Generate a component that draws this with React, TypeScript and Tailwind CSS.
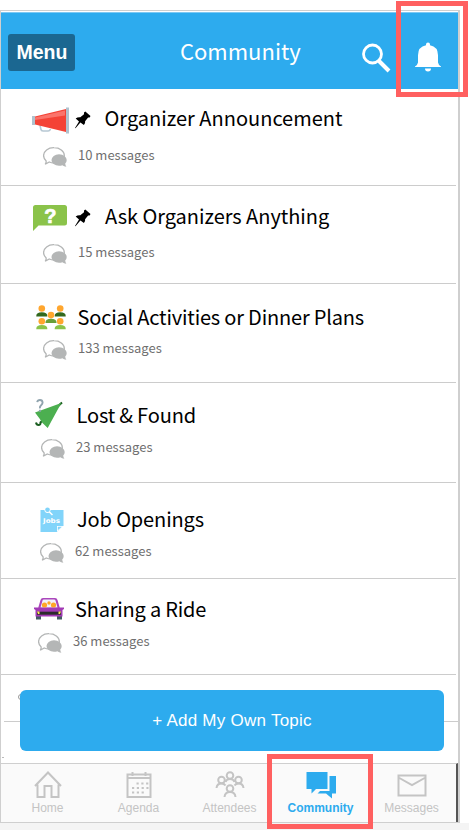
import type { ReactNode } from "react"

import clsx from "clsx"

function Megaphone() {
  return (
    <svg className="size-full" viewBox="0 0 37 27" fill="none">
      <path d="M8 18l.8 4q.4 2 2.200 2h5q2 0 2.300-2" stroke="#b7c8d3" strokeWidth="1.600" />
      <path d="M3 9.500L34 2v23L3 17.500z" fill="#f44336" />
      <path d="M3 10.500L33 3.500v5L3 13z" fill="#fb746b" />
      <path d="M0 9h3v9H0zM34 0.500h3v26h-3z" fill="#b0c2ce" />
    </svg>
  )
}

function Question() {
  return (
    <svg className="size-full" viewBox="0 0 34 26">
      <path d="M2.500 0h29A2.500 2.500 0 0134 2.500v15.500a2.500 2.500 0 01-2.500 2.500H5.500L0 26V2.500A2.500 2.500 0 012.500 0z" fill="#8bc34a" />
      <text x="17.300" y="17.500" textAnchor="middle" fontSize="20" fontWeight="700" fill="#fff" stroke="#fff" strokeWidth=".7" fontFamily="Liberation Sans, sans-serif">?</text>
    </svg>
  )
}

function Person({ x, y, color }: { x: number; y: number; color: string }) {
  return (
    <g transform={`translate(${x} ${y})`}>
      <circle cx="5.500" cy="3.300" r="3.300" fill="#ffa62e" />
      <path d="M0 11.200V10.500Q0 7 5.500 7t5.500 3.500v.7z" fill={color} />
    </g>
  )
}

function People() {
  return (
    <svg className="size-full" viewBox="0 0 30 25">
      <Person x={0.3} y={0.2} color="#33691e" />
      <Person x={18.7} y={0.2} color="#33691e" />
      <Person x={9.5} y={6.8} color="#689f38" />
      <Person x={0.3} y={13} color="#8bc34a" />
      <Person x={18.7} y={13} color="#8bc34a" />
    </svg>
  )
}

function Umbrella() {
  return (
    <svg className="size-full" viewBox="0 0 29 30" fill="none">
      <path d="M28 3.500L6.500 23.500Q6.700 26 4.500 26 2.500 26 2 23.500" stroke="#1b5e20" strokeWidth="2" />
      <path d="M27.300 4L1 13.500 5.500 19.500 8.500 24 13.700 29z" fill="#4caf50" />
      <path d="M3.200 3.200Q3.600 1 6 1t2.600 2.500q0 1.500-1.500 2.700T5.900 9.300" stroke="#90a4ae" strokeWidth="1.900" />
      <path d="M4.900 10.800h2v2h-2z" fill="#90a4ae" />
    </svg>
  )
}

function JobsNote() {
  return (
    <svg className="size-full" viewBox="0 0 24 25">
      <path d="M0.500 3H23.500V18.500L17 25H0.500z" fill="#81d4fa" />
      <path d="M17 25v-6h6.500z" fill="#fff" />
      <path d="M17.800 23.200v-3.400h4z" fill="#81d4fa" />
      <path d="M8 3.500L12.500 8" stroke="#fff" strokeWidth="1.500" />
      <circle cx="7.500" cy="2.800" r="3.100" fill="#fff" />
      <circle cx="7.500" cy="2.700" r="2.300" fill="#81d4fa" />
      <text x="11.500" y="15.800" textAnchor="middle" textLength="17" lengthAdjust="spacingAndGlyphs" fontSize="6.500" fontWeight="700" fill="#fff" fontFamily="DejaVu Sans, sans-serif">Jobs</text>
    </svg>
  )
}

function Car() {
  return (
    <svg className="size-full" viewBox="0 0 30 22">
      <path d="M2 17h5v4.500H2zM23 17h5v4.500h-5z" fill="#455a64" />
      <path d="M4 10.500L6.500 2Q7 0 9 0h12q2 0 2.500 2l2.500 8.500z" fill="#ab47bc" />
      <path d="M6.500 9.500L8.500 2.500Q8.700 1.500 10 1.500h10q1.200 0 1.500 1L23.500 9.500z" fill="#f1f2fb" />
      <circle cx="10.500" cy="7" r="2.600" fill="#ffa726" />
      <circle cx="19.500" cy="7" r="2.600" fill="#ffa726" />
      <circle cx="15" cy="5" r="1.700" fill="#ffa726" />
      <path d="M0 9.500h4.500v.2H25.500v-.2H30v1.500l-1.500 1V18.500H1.500V12L0 11z" fill="#a23ab5" />
      <path d="M3 13.700h24v3H3z" fill="#2b2b2b" />
      <path d="M3 13.500h2.500v2.500H4zM27 13.500h-2.500v2.500H26z" fill="#ffee58" />
    </svg>
  )
}

function Pin() {
  return (
    <svg className="mt-[10px] ml-[6px] h-[18px] w-4 shrink-0" viewBox="0 0 16 18">
      <path d="M10.300 0.500l5.200 4.600-.9 1.500-1.500-.1-3 3.700q.5 2.300-1.200 3.900L5.400 11.500 0.500 17.300 0 16.900 4 10.400 0.700 7.600Q2.500 6 5.300 6.300L9 3.200V1.500z" />
    </svg>
  )
}

function Bubbles() {
  return (
    <svg className="h-5 w-6 shrink-0" viewBox="0 0 24 20">
      <path d="M3 13.700Q.6 11.500.6 8.500.6 5.400 3.600 3T11 .7q4.300 0 7.300 2.300t3 5.500q0 3.200-3 5.300t-7.300 2.200q-2.500 0-4.700-1L2.200 17.300Q3.500 15.500 3 13.700z" fill="#fff" stroke="#b4b6b6" strokeWidth="1.300" />
      <path d="M16 7.200q3.300 0 5.500 1.700t2.200 4.100q0 2-1.500 3.500.1 1.900 1.200 3.200-2.700-.4-4-1.500-1.500.5-3.400.5-3.200 0-5.400-1.600T8.500 13q0-2.400 2.200-4.100T16 7.200z" fill="#b4b6b6" />
    </svg>
  )
}

interface Topic {
  title: string
  count: number
  icon: ReactNode
  iconClass: string
  titleClass: string
  rowClass: string
  messagesClass: string
  pinned?: boolean
}

const TOPICS: Topic[] = [
  {
    title: "Organizer Announcement",
    count: 10,
    icon: <Megaphone />,
    iconClass: "mt-[6px] ml-[31px] h-[27px] w-[37px]",
    titleClass: "ml-[13.500px]",
    rowClass: "h-[97px] pt-[12px]",
    messagesClass: "mt-[16px] pl-[42px]",
    pinned: true,
  },
  {
    title: "Ask Organizers Anything",
    count: 15,
    icon: <Question />,
    iconClass: "mt-[6px] ml-[32px] mr-[2px] h-[26px] w-[34px]",
    titleClass: "ml-[14px] tracking-[-0.040px]",
    rowClass: "h-[98px] pt-[13px]",
    messagesClass: "mt-[15px] pl-[42px]",
    pinned: true,
  },
  {
    title: "Social Activities or Dinner Plans",
    count: 133,
    icon: <People />,
    iconClass: "mt-[5px] ml-[35px] h-[25px] w-[30px]",
    titleClass: "ml-[11.500px] tracking-[-0.190px]",
    rowClass: "h-[99px] pt-[16px]",
    messagesClass: "mt-[10px] pl-[42px]",
  },
  {
    title: "Lost & Found",
    count: 23,
    icon: <Umbrella />,
    iconClass: "mt-[1px] ml-[33px] h-[30px] w-[29px]",
    titleClass: "ml-[13.500px] tracking-[-0.160px]",
    rowClass: "h-[100px] pt-[15px]",
    messagesClass: "mt-[11px] pl-[40px]",
  },
  {
    title: "Job Openings",
    count: 62,
    icon: <JobsNote />,
    iconClass: "mt-[5px] ml-[39px] h-[25px] w-[24px]",
    titleClass: "ml-[13px] tracking-[-0.130px]",
    rowClass: "h-[96px] pt-[19px]",
    messagesClass: "mt-[11px] pl-[39px]",
  },
  {
    title: "Sharing a Ride",
    count: 36,
    icon: <Car />,
    iconClass: "mt-[6px] ml-[33px] h-[22px] w-[30px]",
    titleClass: "ml-[11px] tracking-[-0.200px]",
    rowClass: "h-[96px] pt-[13px]",
    messagesClass: "mt-[11px] pl-[37px]",
  },
]

function TopicRow({ topic }: { topic: Topic }) {
  return (
    <li className={clsx("mr-[2px] border-b border-[#cccccc]", topic.rowClass)}>
      <div className="flex h-[30px] items-start">
        <span className={clsx("shrink-0", topic.iconClass)}>{topic.icon}</span>
        {topic.pinned && <Pin />}
        <h2 className={clsx("mt-[2px] whitespace-nowrap text-[20px] leading-[30px] text-black", topic.titleClass)}>{topic.title}</h2>
      </div>
      <div className={clsx("flex h-[20px] gap-[11px] text-[13px] text-[#707070]", topic.messagesClass)}>
        <Bubbles />
        <span className="whitespace-nowrap leading-[16px]">{topic.count} messages</span>
      </div>
    </li>
  )
}

const TABS = [
  {
    label: "Home",
    icon: (
      <path d="M1 15L14 1.500 27 15M3.500 13.500V26H10.500V15h7v11h7V13.500" />
    ),
  },
  {
    label: "Agenda",
    icon: (
      <>
        <path d="M2.500 3.500h23V26h-23zM2.500 7h23M7.500 1v4M20.500 1v4" />
        <path d="M11.500 12.500h12M7 17h16.500M7 21.500h12" strokeWidth="2.200" strokeDasharray="2.200 2.600" />
      </>
    ),
  },
  {
    label: "Attendees",
    icon: (
      <>
        <circle cx="14" cy="4.500" r="3.300" />
        <circle cx="5.500" cy="9" r="3.300" />
        <circle cx="22.500" cy="9" r="3.300" />
        <circle cx="14" cy="17.500" r="3.300" />
        <path d="M.5 17q.5-4.500 5-4.500 2.700 0 4 2M27.500 17q-.5-4.500-5-4.500-2.700 0-4 2M9.500 11q1-3 4.500-3t4.500 3M8.500 26q.5-5 5.500-5t5.500 5" />
      </>
    ),
  },
  {
    label: "Community",
    active: true,
    icon: (
      <g fill="currentColor" stroke="none" transform="translate(-.500 -.500)">
        <path d="M0 1.500h21v17H9.500L5 23v-4.500H0z" />
        <path d="M23 5.500H29.500V23h-4v5l-6-5h-8.500l2.500-2.500H23z" />
      </g>
    ),
  },
  {
    label: "Messages",
    icon: <path d="M.500 4.500h27v20H.500zM.500 6.500l13.500 7.500 13.500-7.500" />,
  },
]

export default function App() {
  return (
    <div className="relative h-[830px] w-[469px] overflow-hidden bg-white pt-[10px] font-['Noto_Sans_CJK_SC',sans-serif]">
      <div className="flex h-[813px] w-[460px] flex-col border border-r-2 border-[#cfcfcf] pt-px">
        <header className="flex h-[77px] shrink-0 items-center border-t border-[#7cc8f4] bg-[#2dabee]">
          <button className="mt-[2px] ml-[7px] h-[37px] w-[67px] rounded-[3px] bg-[#1b6791] pb-px pl-px font-['Liberation_Sans',sans-serif] text-[19.500px] leading-[34px] font-bold text-white">Menu</button>
          <h1 className="-mt-[2px] ml-[105px] w-[122px] whitespace-nowrap text-[22px] leading-[34px] text-white">Community</h1>
          <svg className="mt-[14px] ml-[59px] h-[30px] w-[30px]" viewBox="0 0 30 30" fill="none" stroke="#fff">
            <circle cx="11.500" cy="11" r="9" strokeWidth="2.800" />
            <path d="M18 18L28 28" strokeWidth="4" />
          </svg>
          <svg className="mt-[11px] ml-[24px] h-[30px] w-[26px]" viewBox="0 0 26 30" fill="#fff">
            <path d="M13 .5a2 2 0 012 2v.7q8 1.500 8 10v7.300q.4 2.500 3 4V25H0v-.5q2.600-1.500 3-4v-7.300q0-8.500 8-10v-.7a2 2 0 012-2zM10 26.500h6q0 3-3 3t-3-3z" />
          </svg>
        </header>

        <ul className="shrink-0">
          {TOPICS.map((topic) => (
            <TopicRow key={topic.title} topic={topic} />
          ))}
        </ul>

        <div className="relative h-[88px] shrink-0 pt-[15px] pl-[19px]">
          <span className="absolute top-[46px] left-[3px] h-px w-[454px] bg-[#cccccc]" />
          <span className="absolute top-[19px] left-[17px] h-[6px] w-[5px] rounded-l-full border border-[#999]" />
          <span className="absolute top-[82px] left-[1px] h-px w-[2px] bg-[#bbb]" />
          <button className="relative h-[61px] w-[424px] rounded-[6px] bg-[#2dabee] font-['Liberation_Sans',sans-serif] text-[17px] tracking-[0.250px] text-white">
            + Add My Own Topic
          </button>
        </div>

        <nav className="grid min-h-0 flex-1 grid-cols-5 border-t border-r-2 border-t-[#cfcfcf] border-r-[#555] bg-[#fafafa] font-['Liberation_Sans',sans-serif]">
          {TABS.map((tab) => (
            <a
              key={tab.label}
              className={clsx(
                "flex flex-col items-center pt-[7px] pl-[2px] text-[12px] leading-[14px]",
                tab.active ? "font-bold text-[#2dabee]" : "text-[#c4c4c4]",
              )}
            >
              <svg className="h-[28px] w-[28px] overflow-visible" viewBox="0 0 28 28" fill="none" stroke="currentColor" strokeWidth="2">
                {tab.icon}
              </svg>
              <span className="mt-[2px]">{tab.label}</span>
            </a>
          ))}
        </nav>
      </div>
      <div className="h-[7px] bg-[#f4f4f4]" />

      {/* callouts around the notification bell and the active tab */}
      <div className="absolute top-[1px] left-[396px] h-[96px] w-[72px] border-[5px] border-[#ff6060]" />
      <div className="absolute top-[754px] left-[267px] h-[75px] w-[106px] border-[5px] border-[#ff6060]" />
    </div>
  )
}
